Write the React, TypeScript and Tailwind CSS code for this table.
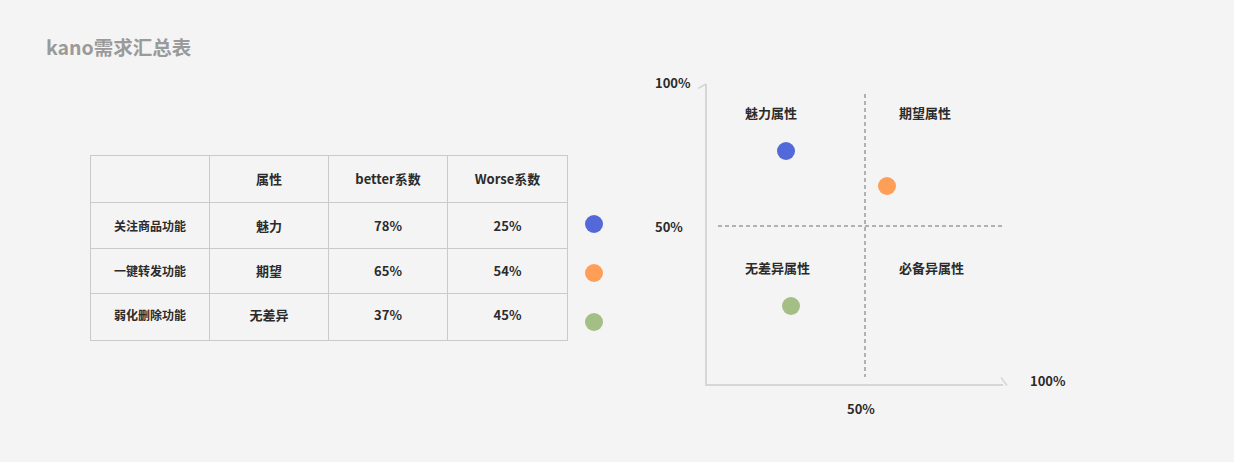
const rows = [
  { name: "关注商品功能", attr: "魅力", better: "78%", worse: "25%", color: "bg-[#5369d9]", h: "h-[46px]", pad: "" },
  { name: "一键转发功能", attr: "期望", better: "65%", worse: "54%", color: "bg-[#ff9f57]", h: "h-[45px]", pad: "" },
  { name: "弱化删除功能", attr: "无差异", better: "37%", worse: "45%", color: "bg-[#a3bf85]", h: "h-[47px]", pad: "pb-[5px]" },
];

function KanoTable() {
  return (
    <table className="mt-[85px] w-[477px] border-collapse table-fixed text-[#2b2b2b]">
      <thead>
        <tr className="h-[47px] text-[13px] font-bold">
          <th className="w-[119px] border border-[#cacaca]"></th>
          <th className="w-[119px] border border-[#cacaca] pb-[1px]">属性</th>
          <th className="w-[119px] border border-[#cacaca] pb-[1px]">better系数</th>
          <th className="w-[120px] border border-[#cacaca] pb-[1px]">Worse系数</th>
        </tr>
      </thead>
      <tbody>
        {rows.map((r) => (
          <tr key={r.name} className={`${r.h} font-bold`}>
            <td className={`border border-[#cacaca] text-center text-[12px] ${r.pad}`}>{r.name}</td>
            <td className={`border border-[#cacaca] text-center text-[13px] ${r.pad}`}>{r.attr}</td>
            <td className={`border border-[#cacaca] text-center text-[13px] ${r.pad}`}>{r.better}</td>
            <td className={`border border-[#cacaca] text-center text-[13px] ${r.pad}`}>{r.worse}</td>
          </tr>
        ))}
      </tbody>
    </table>
  );
}

function QuadrantChart() {
  return (
    <div className="relative ml-[38px] h-[350px] w-[430px] text-[13px] font-bold leading-[18px] text-[#2b2b2b]">
      <svg className="absolute inset-0" width="430" height="350">
        <line x1="65" y1="14" x2="65" y2="316" stroke="#d6d6d6" strokeWidth="2" />
        <line x1="57" y1="18.5" x2="65" y2="14" stroke="#d6d6d6" strokeWidth="1.5" />
        <line x1="64" y1="315" x2="362" y2="315" stroke="#d6d6d6" strokeWidth="2" />
        <line x1="360" y1="307.5" x2="366" y2="315.5" stroke="#d6d6d6" strokeWidth="1.5" />
        <line x1="77" y1="156" x2="361" y2="156" stroke="#9a9a9a" strokeWidth="1.5" strokeDasharray="4 3" />
        <line x1="224" y1="24" x2="224" y2="307" stroke="#6e6e6e" strokeWidth="1" strokeDasharray="4 3" />
      </svg>

      {/* quadrants */}
      <div className="relative ml-[65px] grid grid-cols-[159px_138px] grid-rows-[142px_159px] pt-[14px]">
        <div className="pl-[39px] pt-[20px]">魅力属性</div>
        <div className="pl-[34px] pt-[20px]">期望属性</div>
        <div className="pl-[39px] pt-[33px]">无差异属性</div>
        <div className="pl-[34px] pt-[33px]">必备异属性</div>
      </div>

      {/* axis ticks */}
      <span className="absolute left-[14px] top-[4px]">100%</span>
      <span className="absolute left-[14px] top-[148px]">50%</span>
      <span className="absolute left-[389px] top-[302px]">100%</span>
      <span className="absolute left-[206px] top-[330px]">50%</span>

      {/* data points */}
      <div className="absolute left-[136px] top-[72px] h-[18px] w-[18px] rounded-full bg-[#5369d9]" />
      <div className="absolute left-[237px] top-[107px] h-[18px] w-[18px] rounded-full bg-[#ff9f57]" />
      <div className="absolute left-[141px] top-[227px] h-[18px] w-[18px] rounded-full bg-[#a3bf85]" />
    </div>
  );
}

export default function App() {
  return (
    <div className="h-[462px] w-[1234px] bg-[#f4f4f4] font-['Noto_Sans_CJK_SC',sans-serif]">
      <div className="h-[70px] pl-[46px] pt-[33px]">
        <h1 className="text-[19.5px] font-bold leading-[28px] text-[#9a9a9a]">kano需求汇总表</h1>
      </div>
      <div className="flex items-start pl-[90px]">
        <KanoTable />
        <div className="ml-[17px] mt-[145px] flex flex-col gap-[31px]">
          {rows.map((r) => (
            <div key={r.name} className={`h-[18px] w-[18px] rounded-full ${r.color}`} />
          ))}
        </div>
        <QuadrantChart />
      </div>
    </div>
  );
}
